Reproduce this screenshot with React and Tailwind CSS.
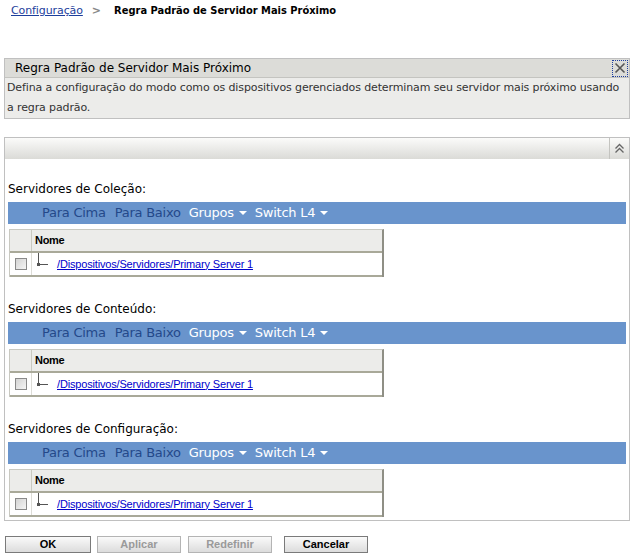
import React from "react";

const sections = [
  "Servidores de Coleção:",
  "Servidores de Conteúdo:",
  "Servidores de Configuração:",
];

function Caret() {
  return (
    <svg width="8" height="5" viewBox="0 0 8 5" className="ml-[5px] mt-[1px]">
      <path d="M0 0h8L4 4z" fill="#ffffff" />
    </svg>
  );
}

function ServerSection({ label, first }) {
  return (
    <div className={first ? "mt-[22px]" : "mt-[24px]"}>
      <div className="h-[16px] leading-[16px] text-[12px] text-black pl-[3px]">
        {label}
      </div>

      {/* barra de ações */}
      <div className="mt-[5px] mx-[3px] h-[22px] bg-[#6994cc] flex items-center pl-[34px] text-[13px] tracking-[-0.25px]">
        <span className="text-[#24498a]">Para Cima</span>
        <span className="text-[#24498a] ml-[9px]">Para Baixo</span>
        <span className="text-white ml-[8px] flex items-center">
          Grupos
          <Caret />
        </span>
        <span className="text-white ml-[8px] flex items-center">
          Switch L4
          <Caret />
        </span>
      </div>

      {/* tabela */}
      <div className="mt-[5px] ml-[4px] w-[375px] border-t border-l border-[#c9c9c1] border-r-2 border-r-[#8f8f85] font-['Liberation_Sans'] text-[11px]">
        <div className="flex h-[23px] bg-[#ececea] border-b-2 border-[#a9a999]">
          <div className="w-[22px] border-r border-[#c9c9c1]" />
          <div className="flex items-center pl-[3px] font-bold text-black tracking-[-0.3px]">
            Nome
          </div>
        </div>
        <div className="flex h-[24px] bg-white border-b-2 border-[#a9a999]">
          <div className="w-[22px] border-r border-[#dcdcd6] flex items-center justify-center">
            <div className="w-[12px] h-[12px] border border-[#8a8a8a] bg-gradient-to-br from-[#d4d4d4] to-[#f6f6f6]" />
          </div>
          <div className="relative w-[25px]">
            <div className="absolute left-[6px] top-0 h-[12px] w-px bg-[#555]" />
            <div className="absolute left-[6px] top-[11px] h-px w-[10px] bg-[#555]" />
            <div className="absolute left-[5px] top-[10px] h-[3px] w-[3px] bg-[#555]" />
          </div>
          <div className="flex items-center">
            <a href="#" className="text-[#0000cc] underline tracking-[-0.17px]">
              /Dispositivos/Servidores/Primary Server 1
            </a>
          </div>
        </div>
      </div>
    </div>
  );
}

function Btn({ children, disabled, wide }) {
  return (
    <button
      type="button"
      className={
        "h-[17px] border border-[#7a7a7a] bg-gradient-to-b from-[#fafafa] to-[#dcdcdc] font-['Liberation_Sans'] font-bold text-[11px] leading-none " +
        (wide ? "w-[86px] " : "w-[84px] ") +
        (disabled ? "text-[#9a9a9a] border-[#b4b4b4]" : "text-black")
      }
    >
      {children}
    </button>
  );
}

export default function App() {
  return (
    <div className="w-[635px] h-[557px] bg-white font-['DejaVu_Sans',sans-serif] text-[11px] text-black overflow-hidden">
      {/* breadcrumb */}
      <div className="h-[21px] flex items-center pl-[11px] pt-[1px]">
        <a href="#" className="text-[#1c3e9c] underline tracking-[-0.1px]">
          Configuração
        </a>
        <span className="ml-[9px] text-[#888] font-bold">&gt;</span>
        <span className="ml-[13px] font-bold font-['DejaVu_Sans_Condensed','DejaVu_Sans',sans-serif]">
          Regra Padrão de Servidor Mais Próximo
        </span>
      </div>

      {/* caixa de informação */}
      <div className="mt-[37px] mx-[4px] w-[626px] border border-[#c0c0c0]">
        <div className="h-[19px] bg-[#dcdcd8] flex items-center justify-between border-b border-[#c4c4c0]">
          <span className="pl-[10px] text-[12px]">Regra Padrão de Servidor Mais Próximo</span>
          <button
            type="button"
            className="w-[16px] h-[17px] mr-[1px] border border-dotted border-[#1f3f9f] flex items-center justify-center"
          >
            <svg width="12" height="12" viewBox="0 0 12 12">
              <path d="M1.5 1.5l9 9M10.5 1.5l-9 9" stroke="#555" strokeWidth="1.6" />
            </svg>
          </button>
        </div>
        <div className="bg-[#ececea] px-[2px] leading-[20px] text-[#333] tracking-[-0.12px]">
          Defina a configuração do modo como os dispositivos gerenciados determinam seu servidor mais próximo usando a regra padrão.
        </div>
      </div>

      {/* painel principal */}
      <div className="mt-[18px] mx-[4px] w-[626px] border border-[#c0c0c0] pb-[3px]">
        <div className="h-[21px] bg-gradient-to-b from-[#fbfbfa] to-[#dbdbd7] flex justify-end">
          <div className="w-[20px] border-l border-[#c4c4c0] flex items-center justify-center">
            <svg width="11" height="11" viewBox="0 0 11 11">
              <path d="M1.5 5.5l4-4 4 4M1.5 9.5l4-4 4 4" stroke="#666" strokeWidth="1.3" fill="none" />
            </svg>
          </div>
        </div>
        {sections.map((s, i) => (
          <ServerSection key={s} label={s} first={i === 0} />
        ))}
      </div>

      {/* botões */}
      <div className="mt-[15px] flex pl-[5px]">
        <Btn wide>OK</Btn>
        <div className="ml-[6px]">
          <Btn disabled>Aplicar</Btn>
        </div>
        <div className="ml-[7px]">
          <Btn disabled>Redefinir</Btn>
        </div>
        <div className="ml-[12px]">
          <Btn>Cancelar</Btn>
        </div>
      </div>
    </div>
  );
}
